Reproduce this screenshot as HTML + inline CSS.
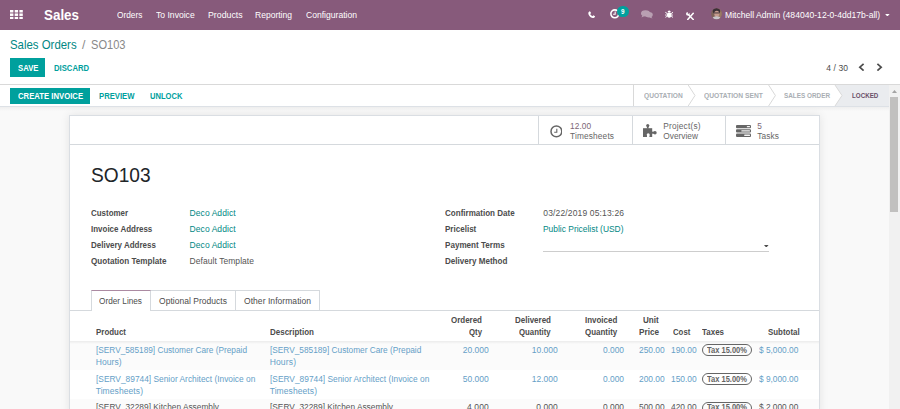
<!DOCTYPE html>
<html><head><meta charset="utf-8"><title>SO103 - Odoo</title>
<style>
*{box-sizing:border-box;margin:0;padding:0}
html,body{width:900px;height:409px;overflow:hidden;background:#f9f9f9;font-family:"Liberation Sans",sans-serif;font-size:8.5px;color:#4c4c4c}
.a{position:absolute}
.t{position:absolute;white-space:pre;line-height:1;transform-origin:0 0}
#nav{position:absolute;left:0;top:0;width:900px;height:30px;background:#875a7b}
#cp{position:absolute;left:0;top:30px;width:900px;height:55px;background:#fff;border-bottom:1px solid #d9d9d9}
#sb{position:absolute;left:0;top:85px;width:889px;height:22px;background:#fff;border-bottom:1px solid #dde1e6}
#sheet{position:absolute;left:69px;top:115px;width:751px;height:300px;background:#fff;border:1px solid #dadee3;box-shadow:0 0 9px rgba(0,0,0,.09)}
.pill{position:absolute;border:1px solid #666;border-radius:6px;height:11.4px;width:50px;left:701.7px}
</style></head><body>
<div id="nav">
  <svg class="a" style="left:10.200px;top:9.500px" width="12.800" height="9.400" viewBox="0 0 12.800 9.400"><g fill="#fff"><rect x="0.00" y="0.00" width="3.4" height="2.5"/><rect x="4.70" y="0.00" width="3.4" height="2.5"/><rect x="9.40" y="0.00" width="3.4" height="2.5"/><rect x="0.00" y="3.45" width="3.4" height="2.5"/><rect x="4.70" y="3.45" width="3.4" height="2.5"/><rect x="9.40" y="3.45" width="3.4" height="2.5"/><rect x="0.00" y="6.90" width="3.4" height="2.5"/><rect x="4.70" y="6.90" width="3.4" height="2.5"/><rect x="9.40" y="6.90" width="3.4" height="2.5"/></g></svg>
  <!-- phone -->
  <svg class="a" style="left:587.800px;top:10.900px" width="7.500" height="7.200" viewBox="0 0 14 14"><path fill="#fff" d="M3.400 .3C2 .9 .3 2.300 .3 3.900c0 5 4.800 9.800 9.800 9.800 1.600 0 3-1.700 3.600-3.100L10 8.200 8.300 10C6.600 9.300 4.700 7.400 4 5.700l1.800-1.700z"/></svg>
  <!-- clock -->
  <svg class="a" style="left:609.600px;top:9.400px" width="9.600" height="9.600" viewBox="0 0 20 20"><circle cx="10" cy="10" r="8.200" fill="none" stroke="#fff" stroke-width="3.300"/><path d="M10.800 5v6H6.500" fill="none" stroke="#fff" stroke-width="2.200"/></svg>
  <div class="a" style="left:617px;top:6.400px;width:11.600px;height:11px;border-radius:6px;background:#00a09d"></div>
  <span class="t" style="left:621px;top:9.400px;font-size:6.300px;font-weight:bold;color:#fff">9</span>
  <!-- chat -->
  <svg class="a" style="left:641px;top:10.200px" width="12" height="8.6" viewBox="0 0 24 17"><g fill="#fff" opacity=".42"><ellipse cx="9" cy="6.500" rx="9" ry="6.300"/><path d="M3 10l-2 5 6-3z"/><ellipse cx="16" cy="9.500" rx="7.500" ry="5.500"/><path d="M20 13l3 4-6-2z"/></g></svg>
  <!-- bug -->
  <svg class="a" style="left:664.900px;top:10px" width="8.400" height="8.400" viewBox="0 0 16 16"><g fill="#fff"><ellipse cx="8" cy="9.500" rx="4.200" ry="5.200"/><path d="M5 3.800a3 3 0 0 1 6 0z"/><path d="M0 8.800h16v1.600H0z"/><path d="M1.300 3.500l3.500 3-1 1.200-3.500-3zM14.700 3.500l-3.500 3 1 1.200 3.500-3zM1.300 15l3.500-3-1-1.200-3.500 3zM14.700 15l-3.500-3 1-1.200 3.500 3z"/></g></svg>
  <!-- tools -->
  <svg class="a" style="left:685.500px;top:11.600px" width="8.600" height="8.400" viewBox="0 0 17.200 16.800"><g stroke="#fff" stroke-width="3" stroke-linecap="round" fill="none"><path d="M3.500 15L14.500 2.500"/><path d="M4.500 5L14.500 15"/></g><path d="M0 3.500a4 4 0 0 1 3.500-3.500v2.800l2 1.200 1.500-2.500a4 4 0 0 1-2 5.500a4 4 0 0 1-5-3.500z" fill="#fff"/></svg>
  <!-- avatar -->
  <svg class="a" style="left:710.800px;top:8.400px" width="11" height="11.600" viewBox="0 0 22 23"><defs><clipPath id="av"><ellipse cx="11" cy="11.500" rx="10.700" ry="11.300"/></clipPath></defs><g clip-path="url(#av)"><rect width="22" height="23" fill="#7d6258"/><rect x="14" y="0" width="8" height="23" fill="#9a7a63"/><ellipse cx="11" cy="6" rx="7.500" ry="6" fill="#3b3036"/><ellipse cx="11.500" cy="11.500" rx="5" ry="6.300" fill="#c69c8e"/><rect x="6.500" y="8.800" width="10" height="2" fill="#4a3b40"/><path d="M2 23c0-5 4-6.500 9-6.500s9 1.500 9 6.500z" fill="#c9c5c9"/></g></svg>
  <svg class="a" style="left:884.800px;top:13.600px" width="4.800" height="2.600" viewBox="0 0 6 3.500"><path d="M0 0h6L3 3.500z" fill="#fff"/></svg>
</div>
<div id="cp">
  <div class="a" style="left:10.400px;top:28px;width:34.300px;height:19.200px;background:#00a09d"></div>
  <svg class="a" style="left:858px;top:33.100px" width="7" height="8.400" viewBox="0 0 7 8.400"><path d="M5.600 .8L1.800 4.200l3.800 3.400" fill="none" stroke="#4c4c4c" stroke-width="1.700"/></svg>
  <svg class="a" style="left:876px;top:33.100px" width="7" height="8.400" viewBox="0 0 7 8.400"><path d="M1.400 .8L5.200 4.200 1.400 7.600" fill="none" stroke="#4c4c4c" stroke-width="1.700"/></svg>
</div>
<div id="sb">
  <div class="a" style="left:10.400px;top:2.500px;width:79.200px;height:16.400px;background:#00a09d"></div>
  <svg class="a" style="left:633px;top:0" width="256" height="21" viewBox="0 0 256 21">
    <path d="M0.500 0V21" stroke="#d9d9d9" fill="none"/>
    <path d="M202 0h54v21h-54l7-10.500z" fill="#eaecef"/>
    <path d="M55.200 0l6.800 10.500-6.800 10.500M135.600 0l6.800 10.500-6.800 10.500M202 0l7 10.500-7 10.500" stroke="#d9d9d9" fill="none"/>
  </svg>
</div>
<div class="a" style="left:0;top:107px;width:889px;height:4px;background:linear-gradient(#efefef,#f9f9f9)"></div>
<!-- scrollbar -->
<div class="a" style="left:889px;top:85px;width:11px;height:324px;background:#f1f1f1"></div>
<div class="a" style="left:890.200px;top:96.500px;width:8.300px;height:115px;background:#c1c0bf"></div>
<svg class="a" style="left:892px;top:89.500px" width="5" height="3" viewBox="0 0 5 3"><path d="M0 3h5L2.500 0z" fill="#a3a3a3"/></svg>
<div id="sheet"></div>
<!-- button box -->
<div class="a" style="left:70px;top:144px;width:749px;height:1px;background:#d5d9dd"></div>
<div class="a" style="left:538px;top:116px;width:1px;height:28px;background:#d5d9dd"></div>
<div class="a" style="left:632px;top:116px;width:1px;height:28px;background:#d5d9dd"></div>
<div class="a" style="left:725px;top:116px;width:1px;height:28px;background:#d5d9dd"></div>
<svg class="a" style="left:549.600px;top:125.200px" width="12.800" height="12.800" viewBox="0 0 12.800 12.800"><circle cx="6.400" cy="6.400" r="5.400" fill="none" stroke="#666" stroke-width="1.500"/><path d="M6.800 3.700v3.600H4.200" fill="none" stroke="#666" stroke-width="1.100"/></svg>
<svg class="a" style="left:642.800px;top:124.200px" width="13.800" height="13.200" viewBox="0 0 13.800 13.200"><g fill="#666"><rect x="0" y="4.200" width="9.200" height="8.800"/><circle cx="4.750" cy="1.600" r="1.600"/><rect x="3.900" y="1.600" width="1.700" height="3"/><circle cx="12" cy="8.700" r="1.700"/><rect x="9" y="7.700" width="3" height="2"/></g><g fill="#fff"><circle cx="5.200" cy="10.800" r="1.500"/><rect x="4" y="10.800" width="2.400" height="2.400"/></g></svg>
<svg class="a" style="left:736px;top:125.200px" width="15" height="11.900" viewBox="0 0 15 11.900"><g fill="#666"><rect x="0" y="0" width="15" height="3.300" rx="1"/><rect x="0" y="4.300" width="15" height="3.300" rx="1"/><rect x="0" y="8.600" width="15" height="3.300" rx="1"/></g><g fill="#f3f3f3"><rect x="10.800" y="1" width="3.200" height="1.300" rx=".5"/><rect x="5.300" y="5.300" width="8.700" height="1.300" rx=".5"/><rect x="8.200" y="9.600" width="5.800" height="1.300" rx=".5"/></g></svg>
<!-- payment terms underline -->
<div class="a" style="left:543.300px;top:251px;width:226px;height:1px;background:#cdcdcd"></div>
<svg class="a" style="left:764.400px;top:244.500px" width="4.600" height="2.600" viewBox="0 0 4.600 2.600"><path d="M0 0h4.600L2.300 2.600z" fill="#4c4c4c"/></svg>
<!-- tabs -->
<div class="a" style="left:70px;top:310px;width:749px;height:1px;background:#d5d9dd"></div>
<div class="a" style="left:91px;top:290px;width:229px;height:21px;border:1px solid #d5d9dd;border-bottom:none"></div>
<div class="a" style="left:91px;top:290px;width:60px;height:21px;background:#fff;border:1px solid #d5d9dd;border-bottom:none;border-top:1px solid #ab8aa2"></div>
<div class="a" style="left:235px;top:290px;width:1px;height:20px;background:#d5d9dd"></div>
<!-- table rows -->
<div class="a" style="left:70px;top:341px;width:749px;height:29px;background:#fbfbfb"></div>
<div class="a" style="left:70px;top:341px;width:749px;height:3px;background:linear-gradient(#ebebeb,#fbfbfb)"></div>
<div class="a" style="left:70px;top:399px;width:749px;height:10px;background:#fbfbfb"></div>
<div class="pill" style="top:344.300px"></div>
<div class="pill" style="top:373.300px"></div>
<div class="pill" style="top:402.300px"></div>
<span class="t" style="left:44.4px;top:7.05px;font-size:15.3px;color:#fff;font-weight:bold;transform:scaleX(0.8753);">Sales</span>
<span class="t" style="left:117.3px;top:10.55px;font-size:8.8px;color:#fff;transform:scaleX(0.9446);">Orders</span>
<span class="t" style="left:156.0px;top:10.55px;font-size:8.8px;color:#fff;transform:scaleX(0.9770);">To Invoice</span>
<span class="t" style="left:207.7px;top:10.55px;font-size:8.8px;color:#fff;transform:scaleX(0.9966);">Products</span>
<span class="t" style="left:255.3px;top:10.55px;font-size:8.8px;color:#fff;transform:scaleX(0.9697);">Reporting</span>
<span class="t" style="left:305.7px;top:10.55px;font-size:8.8px;color:#fff;transform:scaleX(0.9746);">Configuration</span>
<span class="t" style="left:724.9px;top:10.55px;font-size:8.8px;color:#fff;transform:scaleX(0.9760);">Mitchell Admin (484040-12-0-4dd17b-all)</span>
<span class="t" style="left:10.4px;top:38.97px;font-size:12.2px;color:#008784;transform:scaleX(0.9364);">Sales Orders</span>
<span class="t" style="left:82.0px;top:38.97px;font-size:12.2px;color:#888;">/</span>
<span class="t" style="left:90.5px;top:38.97px;font-size:12.2px;color:#888;transform:scaleX(0.9090);">SO103</span>
<span class="t" style="left:17.8px;top:63.92px;font-size:8.6px;color:#fff;font-weight:bold;transform:scaleX(0.8961);">SAVE</span>
<span class="t" style="left:53.6px;top:63.92px;font-size:8.6px;color:#00a09d;font-weight:bold;transform:scaleX(0.8964);">DISCARD</span>
<span class="t" style="left:826.3px;top:64.00px;font-size:8.5px;color:#4c4c4c;letter-spacing:0.084px;">4 / 30</span>
<span class="t" style="left:17.8px;top:91.72px;font-size:8.6px;color:#fff;font-weight:bold;transform:scaleX(0.8989);">CREATE INVOICE</span>
<span class="t" style="left:98.7px;top:91.72px;font-size:8.6px;color:#00a09d;font-weight:bold;transform:scaleX(0.8955);">PREVIEW</span>
<span class="t" style="left:149.8px;top:91.72px;font-size:8.6px;color:#00a09d;font-weight:bold;transform:scaleX(0.8813);">UNLOCK</span>
<span class="t" style="left:644.0px;top:91.82px;font-size:7.3px;color:#a9aeb3;font-weight:bold;transform:scaleX(0.9063);">QUOTATION</span>
<span class="t" style="left:704.0px;top:91.82px;font-size:7.3px;color:#a9aeb3;font-weight:bold;transform:scaleX(0.9161);">QUOTATION SENT</span>
<span class="t" style="left:783.9px;top:91.82px;font-size:7.3px;color:#a9aeb3;font-weight:bold;transform:scaleX(0.8745);">SALES ORDER</span>
<span class="t" style="left:851.7px;top:91.82px;font-size:7.3px;color:#6b4f68;font-weight:bold;transform:scaleX(0.8535);">LOCKED</span>
<span class="t" style="left:570.0px;top:121.77px;font-size:8.3px;color:#7b6675;letter-spacing:0.109px;">12.00</span>
<span class="t" style="left:570.0px;top:131.67px;font-size:8.3px;color:#666;letter-spacing:0.158px;">Timesheets</span>
<span class="t" style="left:663.3px;top:121.77px;font-size:8.3px;color:#666;letter-spacing:0.189px;">Project(s)</span>
<span class="t" style="left:663.3px;top:131.67px;font-size:8.3px;color:#666;letter-spacing:0.017px;">Overview</span>
<span class="t" style="left:757.2px;top:121.77px;font-size:8.3px;color:#7b6675;">5</span>
<span class="t" style="left:757.2px;top:131.67px;font-size:8.3px;color:#666;letter-spacing:0.095px;">Tasks</span>
<span class="t" style="left:90.9px;top:166.09px;font-size:19.5px;color:#212529;transform:scaleX(0.9816);">SO103</span>
<span class="t" style="left:90.7px;top:209.20px;font-size:8.5px;color:#4c4c4c;font-weight:bold;transform:scaleX(0.9348);">Customer</span>
<span class="t" style="left:90.7px;top:225.00px;font-size:8.5px;color:#4c4c4c;font-weight:bold;transform:scaleX(0.9379);">Invoice Address</span>
<span class="t" style="left:90.7px;top:240.80px;font-size:8.5px;color:#4c4c4c;font-weight:bold;transform:scaleX(0.9387);">Delivery Address</span>
<span class="t" style="left:90.7px;top:256.60px;font-size:8.5px;color:#4c4c4c;font-weight:bold;transform:scaleX(0.9534);">Quotation Template</span>
<span class="t" style="left:189.6px;top:209.20px;font-size:8.5px;color:#008784;letter-spacing:0.062px;">Deco Addict</span>
<span class="t" style="left:189.6px;top:225.00px;font-size:8.5px;color:#008784;letter-spacing:0.062px;">Deco Addict</span>
<span class="t" style="left:189.6px;top:240.80px;font-size:8.5px;color:#008784;letter-spacing:0.062px;">Deco Addict</span>
<span class="t" style="left:189.6px;top:256.60px;font-size:8.5px;color:#555;letter-spacing:0.051px;">Default Template</span>
<span class="t" style="left:444.7px;top:209.20px;font-size:8.5px;color:#4c4c4c;font-weight:bold;transform:scaleX(0.9461);">Confirmation Date</span>
<span class="t" style="left:444.7px;top:225.00px;font-size:8.5px;color:#4c4c4c;font-weight:bold;transform:scaleX(0.9462);">Pricelist</span>
<span class="t" style="left:444.7px;top:240.80px;font-size:8.5px;color:#4c4c4c;font-weight:bold;transform:scaleX(0.9523);">Payment Terms</span>
<span class="t" style="left:444.7px;top:256.60px;font-size:8.5px;color:#4c4c4c;font-weight:bold;transform:scaleX(0.9504);">Delivery Method</span>
<span class="t" style="left:543.3px;top:209.20px;font-size:8.5px;color:#555;letter-spacing:0.150px;">03/22/2019 05:13:26</span>
<span class="t" style="left:543.3px;top:225.00px;font-size:8.5px;color:#008784;transform:scaleX(0.9908);">Public Pricelist (USD)</span>
<span class="t" style="left:99.3px;top:296.80px;font-size:8.5px;color:#4c4c4c;transform:scaleX(0.9680);">Order Lines</span>
<span class="t" style="left:159.0px;top:296.80px;font-size:8.5px;color:#4c4c4c;letter-spacing:0.026px;">Optional Products</span>
<span class="t" style="left:244.0px;top:296.80px;font-size:8.5px;color:#4c4c4c;letter-spacing:0.054px;">Other Information</span>
<span class="t" style="left:95.7px;top:328.10px;font-size:8.5px;color:#4c4c4c;font-weight:bold;transform:scaleX(0.9339);">Product</span>
<span class="t" style="left:269.7px;top:328.10px;font-size:8.5px;color:#4c4c4c;font-weight:bold;transform:scaleX(0.9409);">Description</span>
<span class="t" style="left:451.0px;top:315.80px;font-size:8.5px;color:#4c4c4c;font-weight:bold;transform:scaleX(0.9372);">Ordered</span>
<span class="t" style="left:469.0px;top:328.10px;font-size:8.5px;color:#4c4c4c;font-weight:bold;transform:scaleX(0.9173);">Qty</span>
<span class="t" style="left:515.0px;top:315.80px;font-size:8.5px;color:#4c4c4c;font-weight:bold;transform:scaleX(0.9404);">Delivered</span>
<span class="t" style="left:519.3px;top:328.10px;font-size:8.5px;color:#4c4c4c;font-weight:bold;transform:scaleX(0.9193);">Quantity</span>
<span class="t" style="left:584.7px;top:315.80px;font-size:8.5px;color:#4c4c4c;font-weight:bold;transform:scaleX(0.9367);">Invoiced</span>
<span class="t" style="left:584.7px;top:328.10px;font-size:8.5px;color:#4c4c4c;font-weight:bold;transform:scaleX(0.9367);">Quantity</span>
<span class="t" style="left:643.0px;top:315.80px;font-size:8.5px;color:#4c4c4c;font-weight:bold;transform:scaleX(0.9497);">Unit</span>
<span class="t" style="left:638.7px;top:328.10px;font-size:8.5px;color:#4c4c4c;font-weight:bold;transform:scaleX(0.9617);">Price</span>
<span class="t" style="left:672.7px;top:328.10px;font-size:8.5px;color:#4c4c4c;font-weight:bold;transform:scaleX(0.9158);">Cost</span>
<span class="t" style="left:702.0px;top:328.10px;font-size:8.5px;color:#4c4c4c;font-weight:bold;transform:scaleX(0.9368);">Taxes</span>
<span class="t" style="left:767.7px;top:328.10px;font-size:8.5px;color:#4c4c4c;font-weight:bold;transform:scaleX(0.9294);">Subtotal</span>
<span class="t" style="left:95.7px;top:345.80px;font-size:8.5px;color:#65a0c7;transform:scaleX(0.9723);">[SERV_585189] Customer Care (Prepaid</span>
<span class="t" style="left:95.7px;top:357.80px;font-size:8.5px;color:#65a0c7;letter-spacing:0.097px;">Hours)</span>
<span class="t" style="left:269.7px;top:345.80px;font-size:8.5px;color:#65a0c7;transform:scaleX(0.9743);">[SERV_585189] Customer Care (Prepaid</span>
<span class="t" style="left:269.7px;top:357.80px;font-size:8.5px;color:#65a0c7;letter-spacing:0.157px;">Hours)</span>
<span class="t" style="left:462.7px;top:345.80px;font-size:8.5px;color:#65a0c7;">20.000</span>
<span class="t" style="left:531.7px;top:345.80px;font-size:8.5px;color:#65a0c7;">10.000</span>
<span class="t" style="left:602.7px;top:345.80px;font-size:8.5px;color:#65a0c7;transform:scaleX(0.9868);">0.000</span>
<span class="t" style="left:639.3px;top:345.80px;font-size:8.5px;color:#65a0c7;transform:scaleX(0.9885);">250.00</span>
<span class="t" style="left:671.0px;top:345.80px;font-size:8.5px;color:#65a0c7;transform:scaleX(0.9885);">190.00</span>
<span class="t" style="left:707.0px;top:345.97px;font-size:8.3px;color:#646464;font-weight:bold;transform:scaleX(0.9062);">Tax 15.00%</span>
<span class="t" style="left:759.0px;top:345.80px;font-size:8.5px;color:#65a0c7;transform:scaleX(0.9779);">$ 5,000.00</span>
<span class="t" style="left:95.7px;top:374.80px;font-size:8.5px;color:#65a0c7;transform:scaleX(0.9838);">[SERV_89744] Senior Architect (Invoice on</span>
<span class="t" style="left:95.7px;top:386.80px;font-size:8.5px;color:#65a0c7;letter-spacing:0.085px;">Timesheets)</span>
<span class="t" style="left:269.7px;top:374.80px;font-size:8.5px;color:#65a0c7;transform:scaleX(0.9838);">[SERV_89744] Senior Architect (Invoice on</span>
<span class="t" style="left:269.7px;top:386.80px;font-size:8.5px;color:#65a0c7;letter-spacing:0.085px;">Timesheets)</span>
<span class="t" style="left:462.7px;top:374.80px;font-size:8.5px;color:#65a0c7;">50.000</span>
<span class="t" style="left:531.7px;top:374.80px;font-size:8.5px;color:#65a0c7;">12.000</span>
<span class="t" style="left:602.7px;top:374.80px;font-size:8.5px;color:#65a0c7;transform:scaleX(0.9868);">0.000</span>
<span class="t" style="left:639.3px;top:374.80px;font-size:8.5px;color:#65a0c7;transform:scaleX(0.9885);">200.00</span>
<span class="t" style="left:671.0px;top:374.80px;font-size:8.5px;color:#65a0c7;transform:scaleX(0.9885);">150.00</span>
<span class="t" style="left:707.0px;top:374.97px;font-size:8.3px;color:#646464;font-weight:bold;transform:scaleX(0.9062);">Tax 15.00%</span>
<span class="t" style="left:759.0px;top:374.80px;font-size:8.5px;color:#65a0c7;transform:scaleX(0.9779);">$ 9,000.00</span>
<span class="t" style="left:95.7px;top:403.20px;font-size:8.5px;color:#555;transform:scaleX(0.9798);">[SERV_32289] Kitchen Assembly</span>
<span class="t" style="left:269.7px;top:403.20px;font-size:8.5px;color:#555;transform:scaleX(0.9798);">[SERV_32289] Kitchen Assembly</span>
<span class="t" style="left:467.0px;top:403.20px;font-size:8.5px;color:#555;letter-spacing:0.105px;">4.000</span>
<span class="t" style="left:536.3px;top:403.20px;font-size:8.5px;color:#555;letter-spacing:0.030px;">0.000</span>
<span class="t" style="left:602.7px;top:403.20px;font-size:8.5px;color:#555;transform:scaleX(0.9868);">0.000</span>
<span class="t" style="left:639.3px;top:403.20px;font-size:8.5px;color:#555;transform:scaleX(0.9885);">500.00</span>
<span class="t" style="left:671.0px;top:403.20px;font-size:8.5px;color:#555;transform:scaleX(0.9885);">420.00</span>
<span class="t" style="left:707.0px;top:403.37px;font-size:8.3px;color:#646464;font-weight:bold;transform:scaleX(0.9062);">Tax 15.00%</span>
<span class="t" style="left:759.0px;top:403.20px;font-size:8.5px;color:#555;transform:scaleX(0.9779);">$ 2,000.00</span>
</body></html>
